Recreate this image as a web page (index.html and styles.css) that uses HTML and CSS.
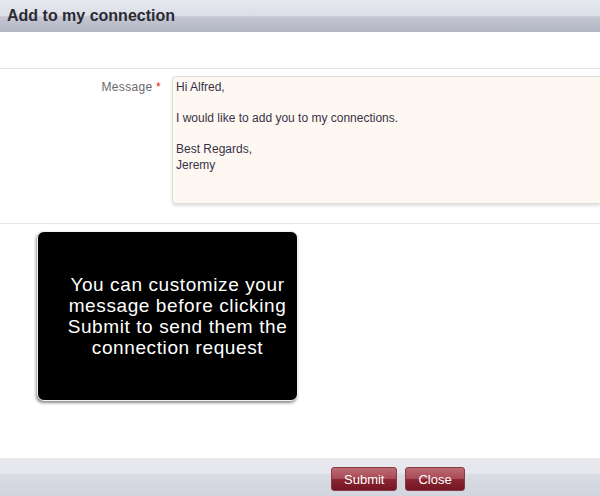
FILE: index.html
```html
<!DOCTYPE html>
<html lang="en">
<head>
    <meta charset="UTF-8">
    <title>Add to my connection</title>
    <link rel="stylesheet" href="styles.css">
</head>
<body>
    <div class="dialog">
        <div class="dialog-header">
            <h1>Add to my connection</h1>
        </div>

        <div class="dialog-body">
            <div class="form-row">
                <label class="form-label" for="message">Message <span class="required">*</span></label>
                <textarea id="message" class="form-input">Hi Alfred,

I would like to add you to my connections.

Best Regards,
Jeremy</textarea>
            </div>

            <!-- Help bubble -->
            <div class="tip">
                <p>You can customize your message before clicking Submit to send them the connection request</p>
            </div>
        </div>

        <div class="dialog-footer">
            <button class="btn">Submit</button>
            <button class="btn">Close</button>
        </div>
    </div>
</body>
</html>
```

FILE: styles.css
```css
/* General Styling */
html, body {
    margin: 0;
    padding: 0;
}

body {
    font-family: "Liberation Sans", Arial, sans-serif;
    background-color: #fff;
    color: #333;
}

.dialog {
    display: flex;
    flex-direction: column;
    width: 600px;
    height: 496px;
    overflow: hidden;
}

/* Header */
.dialog-header {
    height: 32px;
    background: linear-gradient(to bottom, #e7e9f0 0%, #dcdee7 50%, #c5c8d3 52%, #b3b6c3 100%);
    padding: 0 7px;
    display: flex;
    align-items: center;
}

.dialog-header h1 {
    margin: 0;
    font-size: 16px;
    font-weight: 700;
    color: #2b2b33;
}

/* Body */
.dialog-body {
    flex: 1;
    padding-top: 36px;
}

.form-row {
    display: flex;
    align-items: flex-start;
    border-top: 1px solid #e6e6e6;
    border-bottom: 1px solid #e6e6e6;
    padding: 7px 0 19px;
}

.form-label {
    flex: none;
    width: 172px;
    text-align: right;
    padding-top: 4px;
    padding-right: 11px;
    box-sizing: border-box;
    font-size: 12px;
    color: #6a6a6a;
    letter-spacing: 0.3px;
}

.required {
    color: #e02020;
}

.form-input {
    flex: none;
    width: 428px;
    height: 128px;
    margin: 0;
    box-sizing: border-box;
    padding: 3px 3px;
    font-family: "Liberation Sans", Arial, sans-serif;
    font-size: 12px;
    line-height: 15.5px;
    color: #3a3148;
    background-color: #fdf9f2;
    border: 1px solid #e0ddd6;
    border-right: none;
    border-radius: 4px 0 0 4px;
    box-shadow: 0 2px 3px rgba(0, 0, 0, 0.12);
    resize: none;
    outline: none;
}

/* Help bubble */
.tip {
    margin: 7px 0 0 37px;
    width: 261px;
    height: 170px;
    box-sizing: border-box;
    background-color: #000;
    border: 1px solid #f2f2f2;
    border-radius: 7px;
    box-shadow: -1px 2px 3px rgba(0, 0, 0, 0.45);
    display: flex;
    align-items: center;
    justify-content: center;
}

.tip p {
    margin: 0;
    padding: 0 0 0 20px;
    font-size: 19px;
    line-height: 21px;
    letter-spacing: 0.6px;
    color: #fff;
    text-align: center;
}

/* Footer */
.dialog-footer {
    height: 38px;
    background: linear-gradient(to bottom, #e8e9ef 0%, #e6e7ed 40%, #dadce4 44%, #d2d4de 100%);
    display: flex;
    align-items: center;
    padding-left: 331px;
    gap: 8px;
}

.btn {
    height: 24px;
    padding: 0 12px;
    margin-top: 4px;
    font-family: "Liberation Sans", Arial, sans-serif;
    font-size: 13px;
    color: #fff;
    background: linear-gradient(to bottom, #bc6a73 0%, #a84a56 48%, #8a2531 52%, #731722 100%);
    border: 1px solid #8a3a44;
    border-radius: 3px;
    cursor: pointer;
}
```
